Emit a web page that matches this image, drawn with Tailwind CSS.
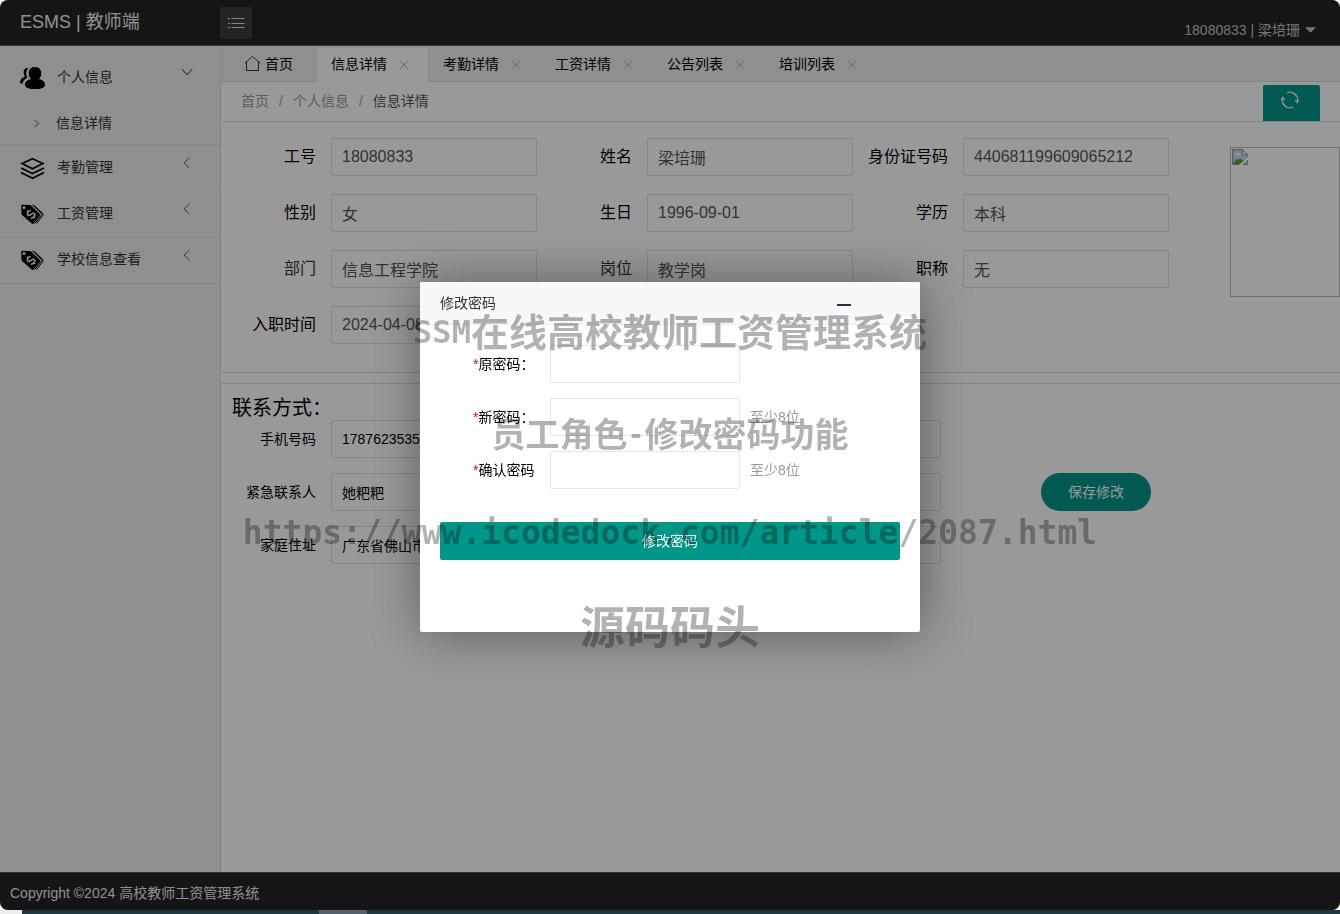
<!DOCTYPE html>
<html lang="zh-CN">
<head>
<meta charset="utf-8">
<title>ESMS | 教师端</title>
<script src="https://cdn.jsdelivr.net/npm/@tailwindcss/browser@4"></script>
</head>
<body class="flex h-screen flex-col overflow-hidden bg-white font-['Liberation_Sans','Noto_Sans_CJK_SC',sans-serif] text-sm text-black">

<svg class="hidden">
  <symbol id="close" viewBox="0 0 10 10"><path d="M.8.8l8.4 8.4M9.2.8L.8 9.200" fill="none" stroke="currentColor" stroke-width="1"/></symbol>
  <symbol id="left" viewBox="0 0 12 12"><path d="M8.500.8L3 6l5.500 5.200" fill="none" stroke="currentColor" stroke-width="1"/></symbol>
  <symbol id="tag" viewBox="0 0 25 24">
    <path d="M1.200 4Q1.200 2.800 2.400 2.800L9.500 3q1 0 1.800.8l8.400 8q.9 1 .1 2l-6.200 7.600q-.9 1-1.900.1L2.300 13.300q-.8-.7-.8-1.600z" fill="#000"/>
    <path d="M11.800 3.200q1 0 1.800.8l7.600 7.300q.9.900.1 1.900l-6.500 8.300M14 3.300l9 8.400q.6.700.1 1.400l-6.500 8.300" fill="none" stroke="#000" stroke-width="1"/>
    <circle cx="4" cy="5.600" r="1.500" fill="#eee"/>
    <g transform="translate(11 12.300) rotate(-48)" fill="none" stroke="#eee" stroke-width="1.500"><path d="M2.800-2.600C1.800-4.200-2.700-4.200-2.700-1.700-2.700.7 2.800-.6 2.800 1.900 2.800 4.300-1.800 4.200-2.900 2.500M0-5.500v2M0 3.500v2"/></g>
  </symbol>
</svg>

<div class="relative flex min-h-0 flex-1 flex-col overflow-hidden rounded-lg">
  <header class="flex h-[46px] shrink-0 items-start justify-between border-b border-[#555] bg-[#232323] pr-6 text-[#ddd]">
    <div class="flex">
      <h1 class="w-[220px] pl-5 text-lg leading-[45px] text-[#f0f0f0]">ESMS | 教师端</h1>
      <button aria-label="菜单" class="mt-[7px] flex size-8 items-center justify-center rounded-xs bg-[#3c3c3c]">
        <svg class="h-4 w-[18px]" viewBox="0 0 18 16" fill="none" stroke="#ddd" stroke-width="1"><path d="M4.500 3.500h13M4.500 8.500h13M4.500 12.500h13M.5 3.500H3M1 8.500h2M.5 12.500H3"/></svg>
      </button>
    </div>
    <button class="mt-4 flex items-center gap-[5px] leading-7 text-[#c4c4c4]">18080833 | 梁培珊
      <svg class="h-[6px] w-[11px]" viewBox="0 0 12 6"><path d="M0 0h12L6 6z" fill="#c4c4c4"/></svg>
    </button>
  </header>

  <div class="flex min-h-0 flex-1">
    <nav class="w-[221px] shrink-0 border-r border-[#ddd] bg-[#eee] pt-2 text-[#333]">
      <a href="#" class="flex h-[46px] items-center pl-5">
        <svg class="mt-0.5 mr-3 h-6 w-[25px]" viewBox="0 0 25 24"><path d="M15 1c4 0 6.300 2.600 6.300 6.300 0 2.400-.9 4.400-2.300 5.600 3.500.9 6 2.900 6 5.500 0 3.300-4 4.700-10 4.700s-10-1.400-10-4.700c0-2.600 2.500-4.600 6-5.500-1.400-1.200-2.300-3.200-2.300-5.600C8.700 3.600 11 1 15 1z"/><path d="M8.500 2C5 1.600 3.300 4.300 3.700 7c.1 1.400.6 2.600 1.300 3.500C2.300 11.500 0 13.500 0 16q0 1 .9 1.600L2.600 18C3 15 5.300 13 7.800 12 6 8.500 6.200 5 8.500 2z"/><path d="M9.200 1.800C6.300 5 6.300 8.500 8 12 5.200 13 3 15 2.900 18.500" fill="none" stroke="#eee" stroke-width="1"/></svg>
        <span class="flex-1">个人信息</span>
        <svg class="mr-[27px] mb-2.5 size-3 text-[#666]" viewBox="0 0 12 12" fill="none" stroke="currentColor" stroke-width="1.100"><path d="M.8 3.200L6 8.700l5.200-5.500"/></svg>
      </a>
      <a href="#" class="flex h-[46px] items-center border-b-2 border-[#e4e4e4] pt-0.5 pl-8">
        <svg class="mr-[15px] size-[9px] text-[#666]" viewBox="0 0 10 10" fill="none" stroke="currentColor" stroke-width="1.100"><path d="M2.500 1l5 4-5 4"/></svg>信息详情
      </a>
      <a href="#" class="flex h-[46px] items-center border-b border-[#e4e4e4] pb-1 pl-5">
        <svg class="mt-0.5 mr-3 h-6 w-[25px]" viewBox="0 0 25 24" fill="none" stroke="#000" stroke-width="1.700"><path d="M12.500 2.700l10.400 4.900-10.400 5.100L2.100 7.600z"/><path d="M1 12l11.500 5.600L24 12M1 16.600l11.500 5.600L24 16.600"/></svg>
        <span class="flex-1">考勤管理</span><svg class="mr-[27px] mb-2 size-3 text-[#666]"><use href="#left"/></svg>
      </a>
      <a href="#" class="flex h-[46px] items-center border-b border-[#e4e4e4] pb-1 pl-5">
        <svg class="mt-0.5 mr-3 h-6 w-[25px]"><use href="#tag"/></svg>
        <span class="flex-1">工资管理</span><svg class="mr-[27px] mb-2 size-3 text-[#666]"><use href="#left"/></svg>
      </a>
      <a href="#" class="flex h-[46px] items-center border-b border-[#e4e4e4] pb-1 pl-5">
        <svg class="mt-0.5 mr-3 h-6 w-[25px]"><use href="#tag"/></svg>
        <span class="flex-1">学校信息查看</span><svg class="mr-[27px] mb-2 size-3 text-[#666]"><use href="#left"/></svg>
      </a>
    </nav>

    <main class="min-w-0 flex-1">
      <div class="flex h-9 items-end border-b border-[#e0e0e0] bg-[#eee]">
        <a href="#" class="flex h-[34px] w-24 items-center gap-1 pl-[23px]">
          <svg class="mb-0.5 size-[17px]" viewBox="0 0 17 17" fill="none" stroke="#333" stroke-width="1"><path d="M.8 8L8.500 1.500 16.200 8M2.500 7v8.500h12V7"/></svg>首页</a>
        <a href="#" class="-mb-px flex h-[34px] w-28 items-center gap-3 border-r border-[#e2e2e2] bg-white pb-0.5 pl-3.5">信息详情<svg class="mt-0.5 size-[10px] text-[#bbb]"><use href="#close"/></svg></a>
        <a href="#" class="flex h-[34px] w-28 items-center gap-3 pl-3.5">考勤详情<svg class="mt-0.5 size-[10px] text-[#bbb]"><use href="#close"/></svg></a>
        <a href="#" class="flex h-[34px] w-28 items-center gap-3 pl-3.5">工资详情<svg class="mt-0.5 size-[10px] text-[#bbb]"><use href="#close"/></svg></a>
        <a href="#" class="flex h-[34px] w-28 items-center gap-3 pl-3.5">公告列表<svg class="mt-0.5 size-[10px] text-[#bbb]"><use href="#close"/></svg></a>
        <a href="#" class="flex h-[34px] w-28 items-center gap-3 pl-3.5">培训列表<svg class="mt-0.5 size-[10px] text-[#bbb]"><use href="#close"/></svg></a>
      </div>

      <div class="flex h-10 items-end justify-between border-b border-[#ddd] pr-5 pl-5">
        <div class="flex gap-2.5 self-center pb-0.5 text-[#999]"><a href="#">首页</a><span>/</span><a href="#">个人信息</a><span>/</span><span class="text-[#555]">信息详情</span></div>
        <button aria-label="刷新" class="flex h-9 w-[57px] justify-center rounded-t-xs bg-[#009688] pt-1.5">
          <svg class="-ml-1 size-[18px]" viewBox="0 0 18 18" fill="none" stroke="#f0f0f0" stroke-width="1.300"><path d="M6 1.800A7.600 7.600 0 0 1 16.500 10M12 16.200A7.600 7.600 0 0 1 1.500 8"/><path d="M14.200 9.200l2.200 2.300 1.300-2.600M3.800 8.800L1.600 6.500.4 9.200M3 13.500q1.200 1.800 3 2.600M15 4.500q-1.200-1.800-3-2.600"/></svg>
        </button>
      </div>

      <section class="flex border-b border-[#ddd] pt-4 pb-7">
        <div class="grid flex-1 grid-cols-3 gap-y-[18px] text-base">
          <div class="flex h-[38px] items-center"><label for="f1" class="w-[110px] shrink-0 pr-[15px] text-right">工号</label><input id="f1" readonly value="18080833" class="h-full w-full min-w-0 rounded-xs border border-[#e0e0e0] pl-2.5 text-[#555]"></div>
          <div class="flex h-[38px] items-center"><label for="f2" class="w-[110px] shrink-0 pr-[15px] text-right">姓名</label><input id="f2" readonly value="梁培珊" class="h-full w-full min-w-0 rounded-xs border border-[#e0e0e0] pl-2.5 text-[#555]"></div>
          <div class="flex h-[38px] items-center"><label for="f3" class="w-[110px] shrink-0 pr-[15px] text-right">身份证号码</label><input id="f3" readonly value="440681199609065212" class="h-full w-full min-w-0 rounded-xs border border-[#e0e0e0] pl-2.5 text-[#555]"></div>
          <div class="flex h-[38px] items-center"><label for="f4" class="w-[110px] shrink-0 pr-[15px] text-right">性别</label><input id="f4" readonly value="女" class="h-full w-full min-w-0 rounded-xs border border-[#e0e0e0] pl-2.5 text-[#555]"></div>
          <div class="flex h-[38px] items-center"><label for="f5" class="w-[110px] shrink-0 pr-[15px] text-right">生日</label><input id="f5" readonly value="1996-09-01" class="h-full w-full min-w-0 rounded-xs border border-[#e0e0e0] pl-2.5 text-[#555]"></div>
          <div class="flex h-[38px] items-center"><label for="f6" class="w-[110px] shrink-0 pr-[15px] text-right">学历</label><input id="f6" readonly value="本科" class="h-full w-full min-w-0 rounded-xs border border-[#e0e0e0] pl-2.5 text-[#555]"></div>
          <div class="flex h-[38px] items-center"><label for="f7" class="w-[110px] shrink-0 pr-[15px] text-right text-[#333]">部门</label><input id="f7" readonly value="信息工程学院" class="h-full w-full min-w-0 rounded-xs border border-[#e0e0e0] pl-2.5 text-[#555]"></div>
          <div class="flex h-[38px] items-center"><label for="f8" class="w-[110px] shrink-0 pr-[15px] text-right text-[#333]">岗位</label><input id="f8" readonly value="教学岗" class="h-full w-full min-w-0 rounded-xs border border-[#e0e0e0] pl-2.5 text-[#555]"></div>
          <div class="flex h-[38px] items-center"><label for="f9" class="w-[110px] shrink-0 pr-[15px] text-right">职称</label><input id="f9" readonly value="无" class="h-full w-full min-w-0 rounded-xs border border-[#e0e0e0] pl-2.5 text-[#555]"></div>
          <div class="flex h-[38px] items-center"><label for="f10" class="w-[110px] shrink-0 pr-[15px] text-right">入职时间</label><input id="f10" readonly value="2024-04-08" class="h-full w-full min-w-0 rounded-xs border border-[#e0e0e0] pl-2.5 text-[#555]"></div>
        </div>
        <div class="mt-[9px] ml-[61px] h-[150px] w-[110px] shrink-0 border border-[#bbb] p-px">
          <svg class="size-4" viewBox="0 0 16 16"><path d="M.5.500h10l5 5v10H.5z" fill="#c3d3f0" stroke="#999"/><path d="M1 15q2-5 6.500-5 4 0 6 5z" fill="#4ca62c"/><path d="M3 6.500q0-2 2-2 1-2 2.500 0 1.800 0 1.800 2z" fill="#fff"/><path d="M16 7.500v3L10.500 16H7z" fill="#fff"/><path d="M10.500.500v5h5z" fill="#fff" stroke="#999"/></svg>
        </div>
      </section>

      <section class="mt-2.5 border-t border-[#ddd] pt-3">
        <h2 class="pl-[11px] text-xl leading-6">联系方式：</h2>
        <div class="flex items-center">
          <div class="flex w-[720px] flex-col gap-[15px]">
            <div class="flex h-[38px] items-center"><label for="c1" class="w-[110px] shrink-0 pr-[15px] text-right">手机号码</label><input id="c1" value="17876235350" class="h-full min-w-0 flex-1 rounded-xs border border-[#e0e0e0] pl-2.5"></div>
            <div class="flex h-[38px] items-center"><label for="c2" class="w-[110px] shrink-0 pr-[15px] text-right">紧急联系人</label><input id="c2" value="她粑粑" class="h-full min-w-0 flex-1 rounded-xs border border-[#e0e0e0] pl-2.5"></div>
            <div class="flex h-[38px] items-center"><label for="c3" class="w-[110px] shrink-0 pr-[15px] text-right">家庭住址</label><input id="c3" value="广东省佛山市" class="h-full min-w-0 flex-1 rounded-xs border border-[#e0e0e0] pl-2.5"></div>
          </div>
          <button class="ml-[100px] h-[38px] w-[110px] rounded-full bg-[#009688] text-white">保存修改</button>
        </div>
      </section>
    </main>
  </div>

  <footer class="h-[38px] shrink-0 border-t border-[#555] bg-[#232323] pl-2.5 leading-10 text-[#eee]">Copyright ©2024 高校教师工资管理系统</footer>
  <div class="absolute inset-0 bg-black/40"></div>
</div>

<div class="flex h-1 shrink-0 bg-[#223640]"><div class="w-[22px] bg-[#eee]"></div><div class="ml-[297px] w-12 bg-[#566269]"></div></div>

<div class="fixed inset-0 flex items-center justify-center">
  <div role="dialog" aria-labelledby="dlg" class="h-[350px] w-[500px] rounded-xs bg-white shadow-[1px_1px_50px_rgba(0,0,0,0.4)]">
    <div class="flex h-[43px] items-center justify-between rounded-t-xs border-b border-[#eee] bg-[#f8f8f8] pl-5 text-[#333]">
      <h2 id="dlg">修改密码</h2>
      <button aria-label="最小化" class="mr-[69px] flex h-5 w-3.5 items-center"><span class="mt-1 h-0.5 w-full bg-[#2e2d3c]"></span></button>
    </div>
    <form class="px-5 pt-5">
      <div class="flex flex-col gap-[15px]">
        <div class="flex h-[38px] items-center"><label for="p1" class="w-[110px] pl-[33px]"><span class="text-red-600">*</span>原密码：</label><input id="p1" type="password" class="h-full w-[190px] rounded-xs border border-[#e6e6e6] px-2.5"></div>
        <div class="flex h-[38px] items-center"><label for="p2" class="w-[110px] pl-[33px]"><span class="text-red-600">*</span>新密码：</label><input id="p2" type="password" class="mr-2.5 h-full w-[190px] rounded-xs border border-[#e6e6e6] px-2.5"><span class="text-[#999]">至少8位</span></div>
        <div class="flex h-[38px] items-center"><label for="p3" class="w-[110px] pl-[33px]"><span class="text-red-600">*</span>确认密码</label><input id="p3" type="password" class="mr-2.5 h-full w-[190px] rounded-xs border border-[#e6e6e6] px-2.5"><span class="text-[#999]">至少8位</span></div>
      </div>
      <button type="button" class="mt-[33px] h-[38px] w-full rounded-xs bg-[#009688] text-white">修改密码</button>
    </form>
  </div>
</div>

<!-- Watermark lines over the whole window -->
<div class="pointer-events-none fixed inset-x-0 top-[308px] flex flex-col items-center font-['DejaVu_Sans_Mono','Noto_Sans_CJK_SC',monospace] font-bold whitespace-nowrap text-black/30">
  <p class="flex h-[50px] items-center text-[38px]"><span class="text-[32px]">SSM</span>在线高校教师工资管理系统</p>
  <p class="mt-[52px] flex h-[50px] items-center text-[34px]">员工角色<span class="text-[28px]">-</span>修改密码功能</p>
  <p class="mt-[48px] flex h-[50px] items-center text-[33px]">https://www.icodedock.com/article/2087.html</p>
  <p class="mt-[46px] flex h-[50px] items-center text-[45px]">源码码头</p>
</div>
</body>
</html>
